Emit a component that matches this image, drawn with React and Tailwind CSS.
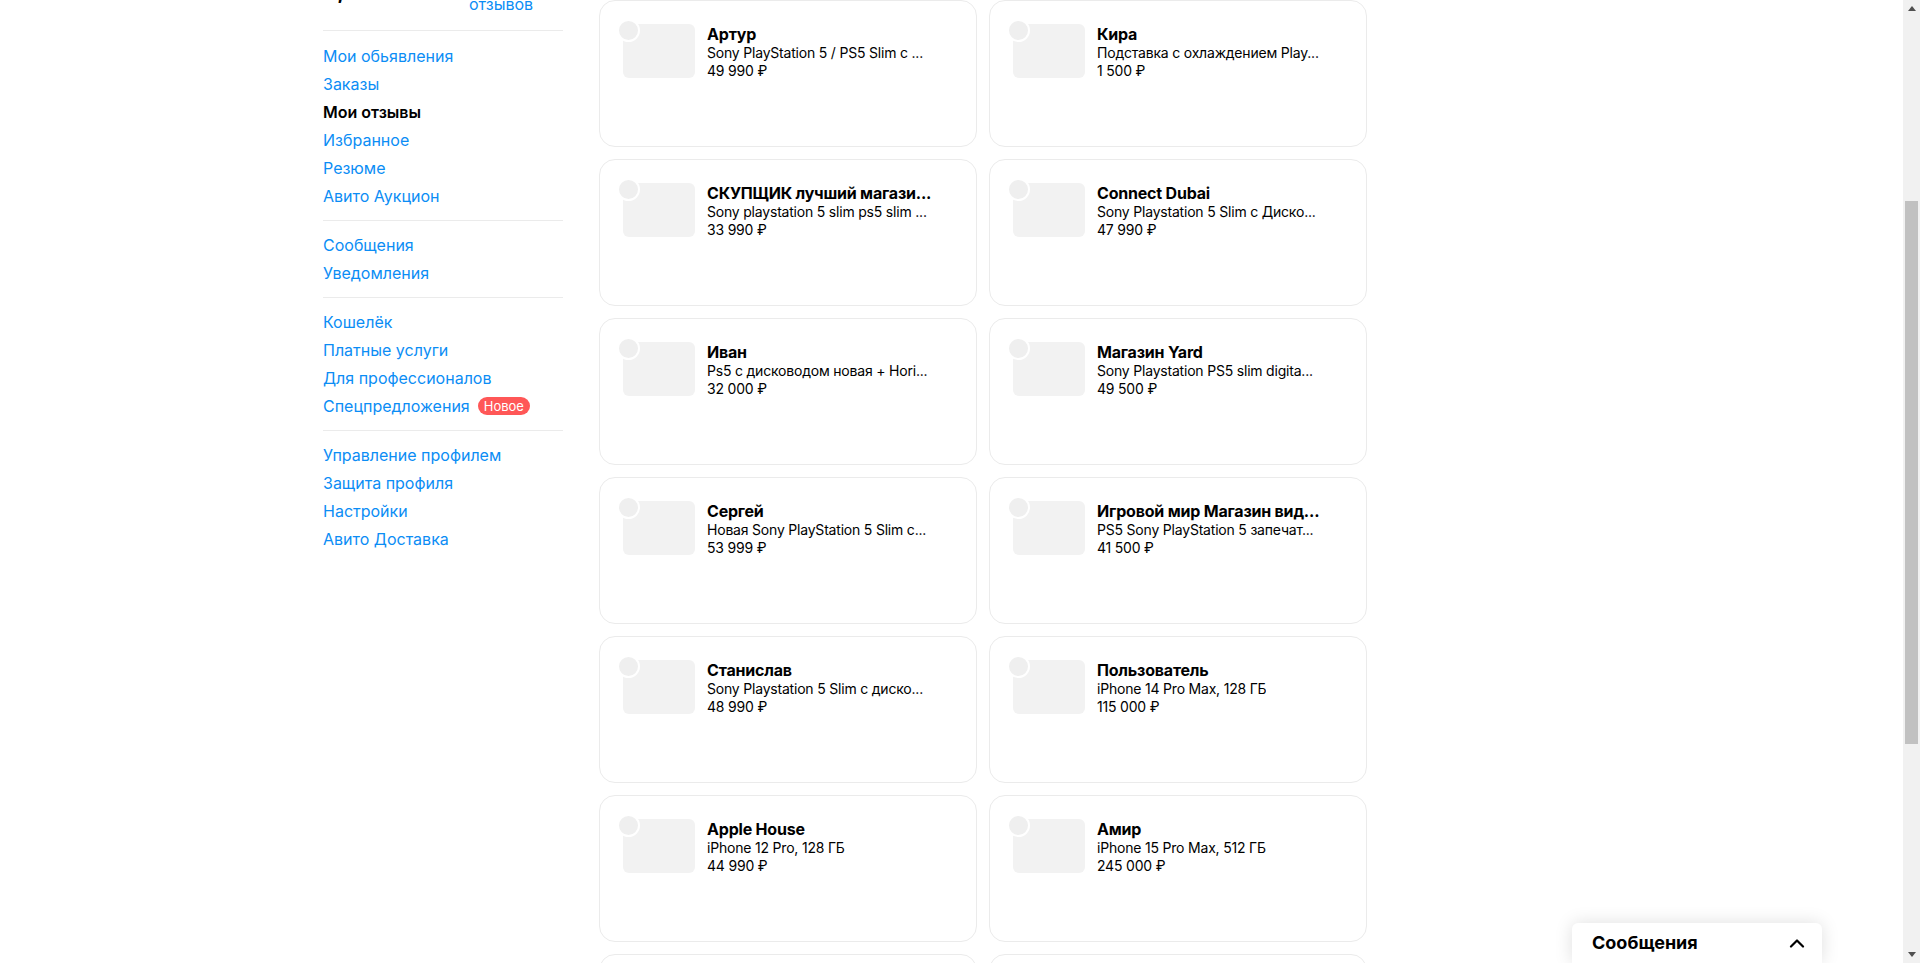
import React, { useLayoutEffect, useRef } from 'react';

const menuGroups = [
  [
    { label: 'Мои обьявления' },
    { label: 'Заказы' },
    { label: 'Мои отзывы', active: true },
    { label: 'Избранное' },
    { label: 'Резюме' },
    { label: 'Авито Аукцион' },
  ],
  [{ label: 'Сообщения' }, { label: 'Уведомления' }],
  [
    { label: 'Кошелёк' },
    { label: 'Платные услуги' },
    { label: 'Для профессионалов' },
    { label: 'Спецпредложения', badge: 'Новое' },
  ],
  [
    { label: 'Управление профилем' },
    { label: 'Защита профиля' },
    { label: 'Настройки' },
    { label: 'Авито Доставка' },
  ],
];

const deals = [
  { name: 'Артур', item: 'Sony PlayStation 5 / PS5 Slim с ...', price: '49 990 ₽' },
  { name: 'Кира', item: 'Подставка с охлаждением Play...', price: '1 500 ₽' },
  { name: 'СКУПЩИК лучший магази...', item: 'Sony playstation 5 slim ps5 slim ...', price: '33 990 ₽' },
  { name: 'Connect Dubai', item: 'Sony Playstation 5 Slim с Диско...', price: '47 990 ₽' },
  { name: 'Иван', item: 'Ps5 с дисководом новая + Hori...', price: '32 000 ₽' },
  { name: 'Магазин Yard', item: 'Sony Playstation PS5 slim digita...', price: '49 500 ₽' },
  { name: 'Сергей', item: 'Новая Sony PlayStation 5 Slim с...', price: '53 999 ₽' },
  { name: 'Игровой мир Магазин вид...', item: 'PS5 Sony PlayStation 5 запечат...', price: '41 500 ₽' },
  { name: 'Станислав', item: 'Sony Playstation 5 Slim с диско...', price: '48 990 ₽' },
  { name: 'Пользователь', item: 'iPhone 14 Pro Max, 128 ГБ', price: '115 000 ₽' },
  { name: 'Apple House', item: 'iPhone 12 Pro, 128 ГБ', price: '44 990 ₽' },
  { name: 'Амир', item: 'iPhone 15 Pro Max, 512 ГБ', price: '245 000 ₽' },
  { name: 'Дмитрий', item: 'DualSense Edge геймпад', price: '18 500 ₽' },
  { name: 're:Store', item: 'iPhone 13, 256 ГБ', price: '52 990 ₽' },
  { name: 'Алексей', item: 'Sony PlayStation 4 Pro 1 ТБ', price: '24 000 ₽' },
  { name: 'Ольга', item: 'AirPods Pro 2', price: '16 990 ₽' },
];

const Star = () => (
  <svg viewBox="0 0 24 24" className="h-4 w-4 fill-[#ffb021]">
    <path d="M12 2.5l2.9 6.1 6.6.8-4.9 4.6 1.3 6.6L12 17.3l-5.9 3.3 1.3-6.6-4.9-4.6 6.6-.8z" />
  </svg>
);

const DealCard = ({ name, item, price }) => (
  <div className="h-[147px] rounded-2xl border border-[#ebebeb] bg-white p-[23px]">
    <div className="flex gap-3">
      <div className="relative h-[54px] w-[72px] shrink-0 rounded-md bg-[#f2f2f2]">
        <div className="absolute -left-1.5 -top-[5px] h-[23px] w-[23px] rounded-full border-2 border-white bg-[#efefef]" />
      </div>
      <div className="min-w-0 overflow-hidden text-black tracking-[-0.2px]">
        <div className="whitespace-nowrap text-base font-bold leading-5">{name}</div>
        <div className="whitespace-nowrap text-sm leading-[18px]">{item}</div>
        <div className="whitespace-nowrap text-sm leading-[18px]">{price}</div>
      </div>
    </div>
  </div>
);

const Sidebar = () => (
  <aside className="w-[240px] shrink-0">
    <div className="h-20 w-20 rounded-full bg-[#f2f2f2]" />
    <div className="mt-2 text-xl font-bold leading-7 text-black">Пользователь</div>
    <div className="mt-2 flex items-start">
      <span className="mt-[3px] text-[22px] font-bold leading-[28px] text-black">4,9</span>
      <span className="ml-1.5 mt-1.5 flex">
        <Star />
        <Star />
        <Star />
        <Star />
        <Star />
      </span>
      <a className="ml-auto w-[94px] text-base leading-5 text-[#0b8df5]">
        12
        <br />
        отзывов
      </a>
    </div>

    <div className="mt-4">
      {menuGroups.map((group, i) => (
        <div key={i}>
          <div className={`h-px bg-[#ebebeb] ${i === 0 ? 'mb-[11px]' : 'my-[10px]'}`} />
          {group.map((entry) => (
            <div key={entry.label} className="flex h-7 items-center">
              <span
                className={
                  entry.active
                    ? 'text-base font-semibold text-black'
                    : 'text-base text-[#0b8df5]'
                }
              >
                {entry.label}
              </span>
              {entry.badge && (
                <span className="ml-2 flex h-[18px] items-center rounded-full bg-[#ff5757] px-1.5 text-[13px] leading-none text-white">
                  {entry.badge}
                </span>
              )}
            </div>
          ))}
        </div>
      ))}
    </div>
  </aside>
);

const Scrollbar = () => (
  <div className="flex w-[17px] shrink-0 flex-col bg-[#f1f1f1]">
    <div className="flex h-[17px] items-center justify-center">
      <svg width="8" height="5" viewBox="0 0 8 5" className="fill-[#505050]">
        <path d="M4 0L8 5H0z" />
      </svg>
    </div>
    <div className="flex-1 px-[2px]">
      <div className="mt-[184px] h-[543px] bg-[#c1c1c1]" />
    </div>
    <div className="flex h-[17px] items-center justify-center">
      <svg width="8" height="5" viewBox="0 0 8 5" className="fill-[#505050]">
        <path d="M0 0H8L4 5z" />
      </svg>
    </div>
  </div>
);

const MessagesDock = () => (
  <div className="absolute bottom-0 right-[98px] flex h-10 w-[250px] items-center justify-between rounded-t-md bg-white pl-5 pr-[17px] shadow-[0_0_18px_rgba(0,0,0,0.13)]">
    <span className="text-lg font-bold text-black">Сообщения</span>
    <svg width="16" height="10" viewBox="0 0 16 10" fill="none" stroke="#000" strokeWidth="2.2" strokeLinecap="round" strokeLinejoin="round">
      <path d="M2 8.5L8 2.5l6 6" />
    </svg>
  </div>
);

export default function App() {
  const pageRef = useRef(null);
  const gridRef = useRef(null);

  // the page is shown scrolled so that the first row of cards sits at the top
  useLayoutEffect(() => {
    const page = pageRef.current;
    const grid = gridRef.current;
    page.scrollTop =
      grid.getBoundingClientRect().top - page.getBoundingClientRect().top + page.scrollTop;
  }, []);

  return (
    <div className="relative flex h-[963px] overflow-hidden bg-white font-[Inter,'Noto_Sans',sans-serif] text-black">
      <div ref={pageRef} className="flex-1 overflow-hidden">
        <header className="h-14 border-b border-[#ebebeb]">
          <div className="mx-auto flex h-full w-[1257px] items-center gap-6 text-sm">
            <span className="text-2xl font-bold text-[#0b8df5]">Авито</span>
            <span>Для бизнеса</span>
            <span>Карьера в Авито</span>
            <span>Помощь</span>
          </div>
        </header>

        <div className="mx-auto flex w-[1257px] items-start gap-9 pb-10 pt-6">
          <Sidebar />
          <main className="w-[768px]">
            <div className="h-[150px]">
              <h1 className="text-[32px] font-bold leading-10">Мои отзывы</h1>
              <div className="mt-6 flex gap-6 text-base">
                <span className="font-semibold">Ожидают оценки</span>
                <span className="text-[#0b8df5]">Оставленные</span>
                <span className="text-[#0b8df5]">Обо мне</span>
              </div>
            </div>
            <div ref={gridRef} className="grid grid-cols-2 gap-3">
              {deals.map((d, i) => (
                <DealCard key={i} {...d} />
              ))}
            </div>
          </main>
        </div>
      </div>
      <Scrollbar />
      <MessagesDock />
    </div>
  );
}
